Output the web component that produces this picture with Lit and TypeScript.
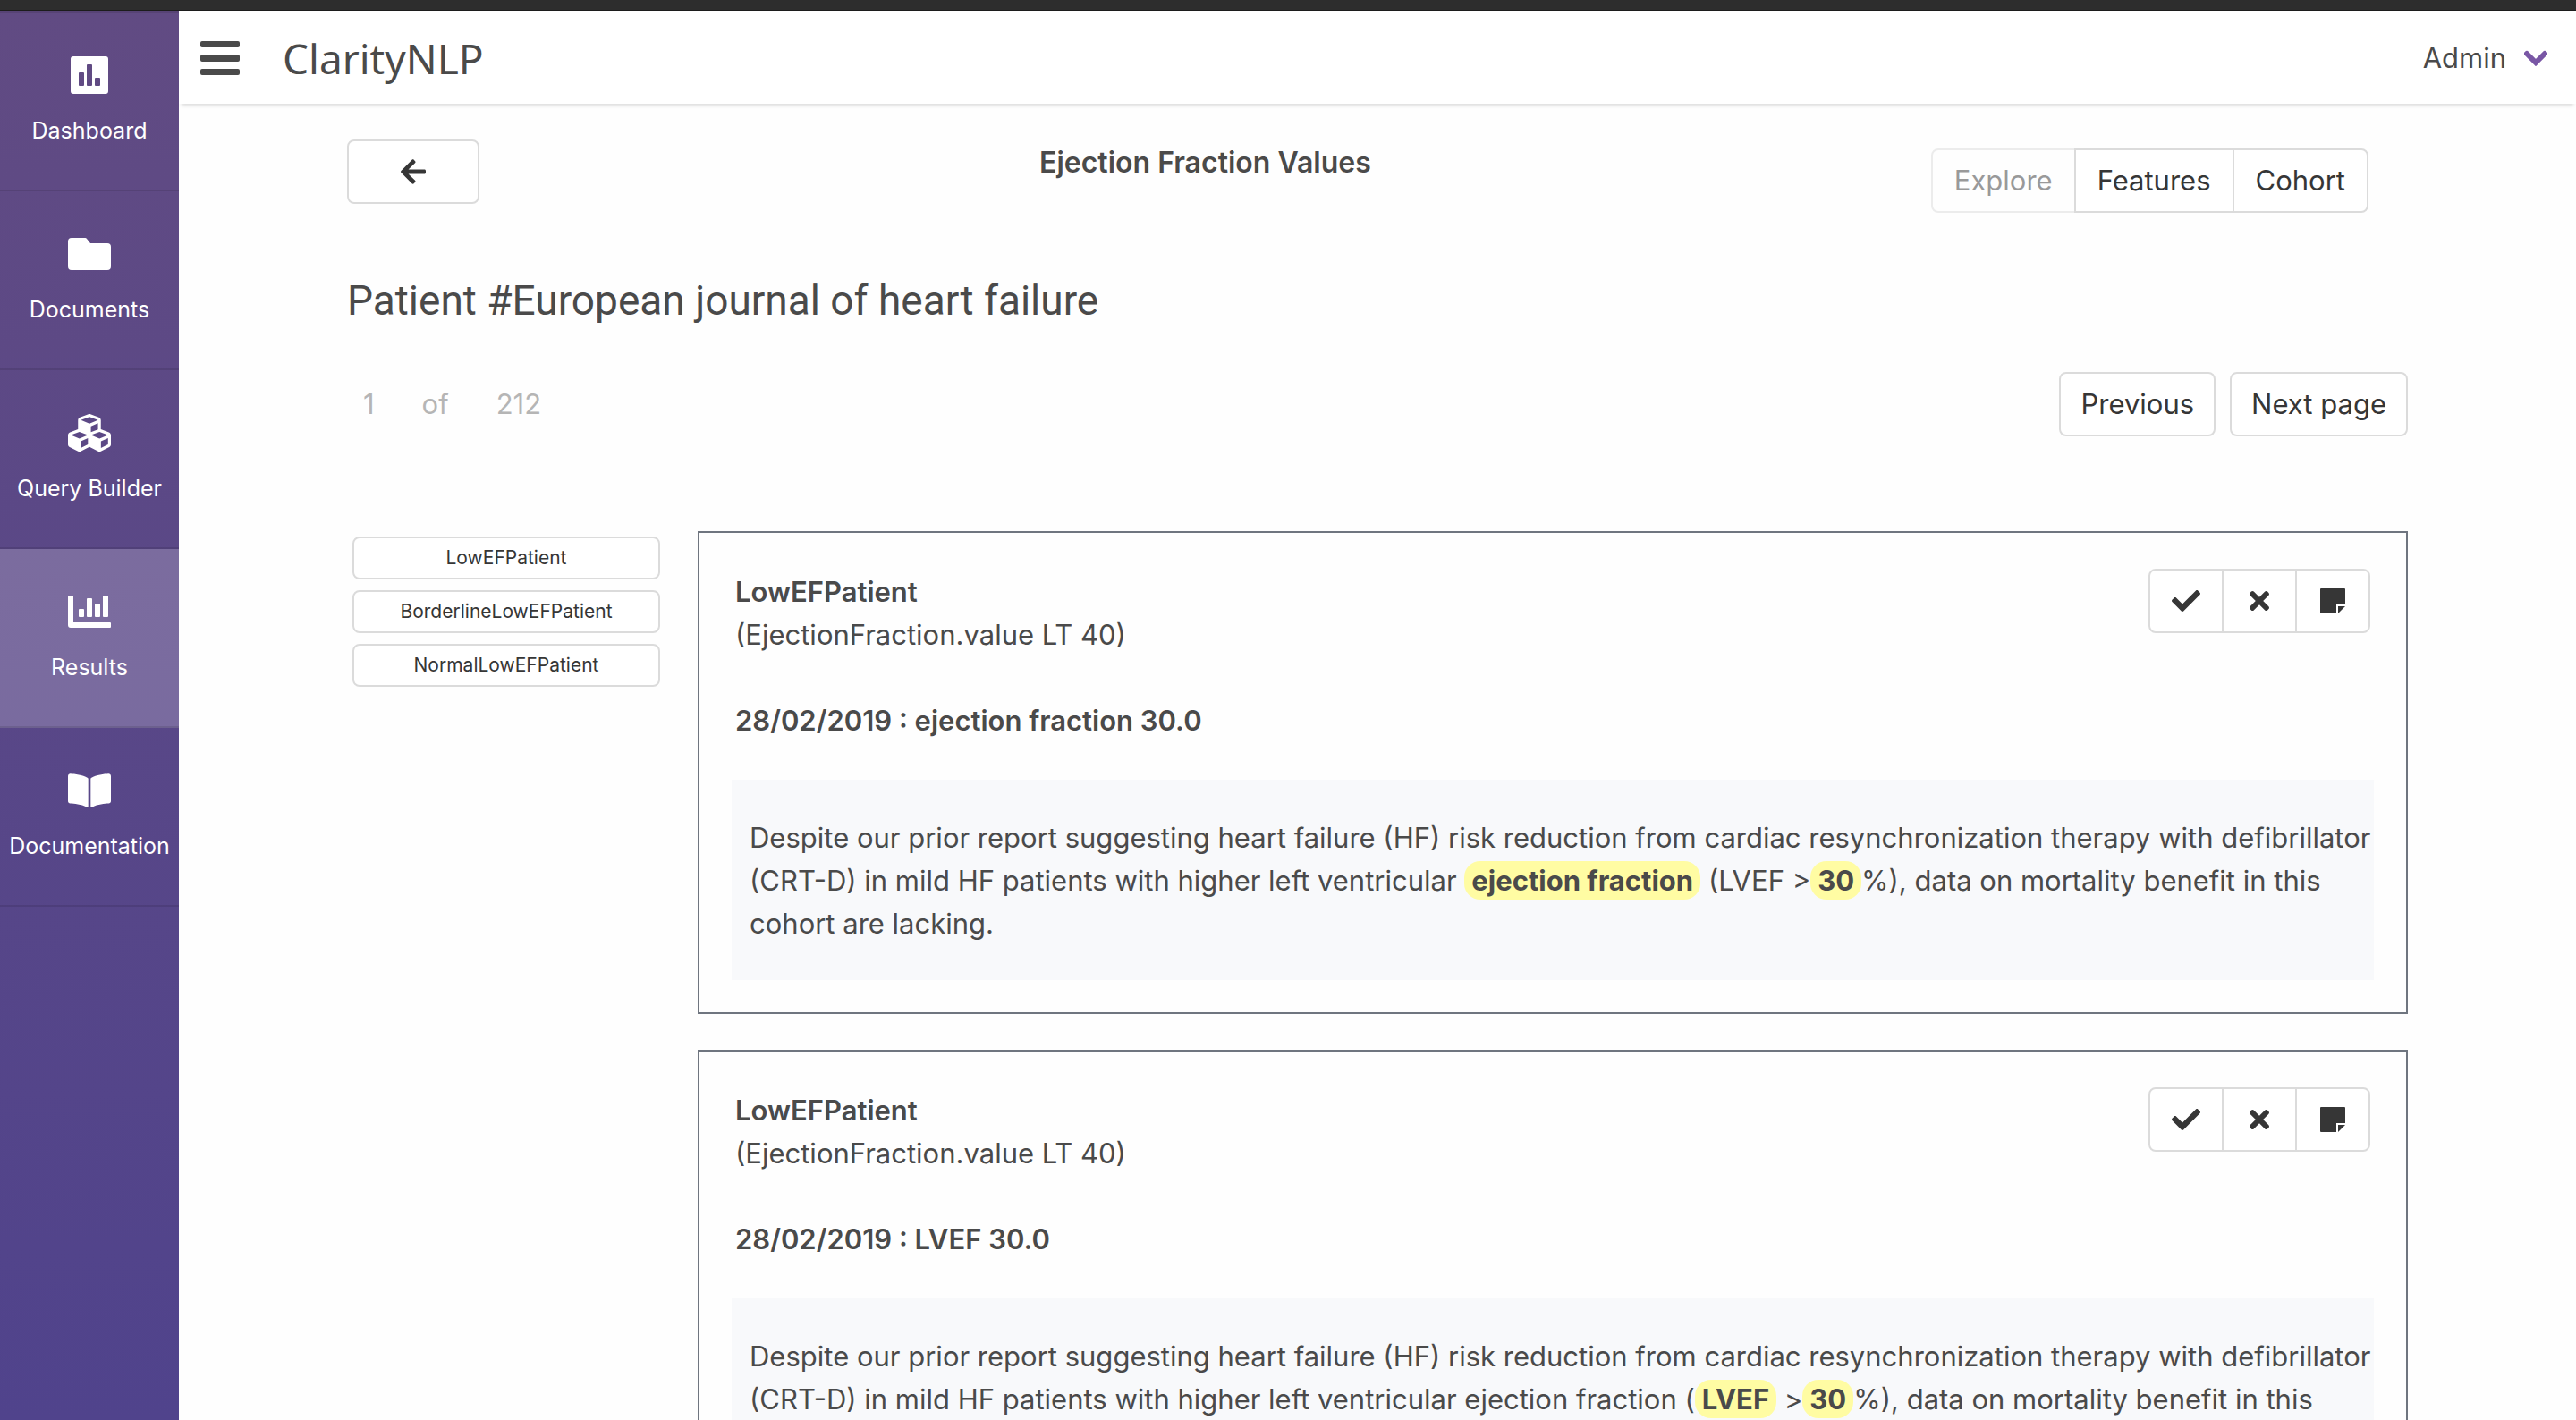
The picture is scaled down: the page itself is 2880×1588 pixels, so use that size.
import { LitElement, html, css, svg, type SVGTemplateResult } from "lit";
import { customElement, property } from "lit/decorators.js";
import { classMap } from "lit/directives/class-map.js";

type Part = string | { mark: string };

interface Evidence {
  feature: string;
  rule: string;
  summary: string;
  sentence: Part[];
}

interface NavItem {
  label: string;
  icon: SVGTemplateResult;
  active?: boolean;
}

const icons = {
  dashboard: svg`<svg viewBox="0 0 48 48" width="48" height="48" fill="currentColor" aria-hidden="true"><path fill-rule="evenodd" d="M6 3h36a3 3 0 0 1 3 3v36a3 3 0 0 1-3 3H6a3 3 0 0 1-3-3V6a3 3 0 0 1 3-3zM13 21a1 1 0 0 0-1 1v13a1 1 0 0 0 1 1h4a1 1 0 0 0 1-1V22a1 1 0 0 0-1-1zM22 12a1 1 0 0 0-1 1v22a1 1 0 0 0 1 1h4a1 1 0 0 0 1-1V13a1 1 0 0 0-1-1zM31 27a1 1 0 0 0-1 1v7a1 1 0 0 0 1 1h4a1 1 0 0 0 1-1v-7a1 1 0 0 0-1-1z"/></svg>`,
  folder: svg`<svg viewBox="0 0 48 48" width="48" height="48" fill="currentColor" aria-hidden="true"><path d="M4 6h15a2 2 0 0 1 2 1l4 5h19a4 4 0 0 1 4 4v22a4 4 0 0 1-4 4H4a4 4 0 0 1-4-4V10a4 4 0 0 1 4-4z"/></svg>`,
  cubes: svg`<svg viewBox="0 0 512 512" width="48" height="48" fill="currentColor" aria-hidden="true"><path d="M488.600 250.200L392 214V105.500c0-15-9.300-28.400-23.400-33.700l-100-37.500c-8.100-3.100-17.100-3.100-25.300 0l-100 37.500c-14.100 5.300-23.400 18.700-23.400 33.700V214l-96.600 36.200C9.300 255.500 0 268.900 0 283.900V394c0 13.600 7.700 26.100 19.900 32.200l100 50c10.100 5.100 22.100 5.100 32.200 0l103.900-52 103.900 52c10.100 5.100 22.100 5.100 32.200 0l100-50c12.200-6.100 19.900-18.600 19.900-32.200V283.900c0-15-9.300-28.400-23.400-33.700zM358 214.800l-85 31.900v-68.200l85-37v73.300zM154 104.100l102-38.200 102 38.200v.6l-102 41.400-102-41.400v-.6zm84 291.100l-85 42.500v-79.100l85-38.800v75.400zm0-112l-102 41.400-102-41.400v-.6l102-38.200 102 38.200v.6zm240 112l-85 42.500v-79.100l85-38.800v75.400zm0-112l-102 41.400-102-41.400v-.6l102-38.200 102 38.200v.6z"/></svg>`,
  chart: svg`<svg viewBox="0 0 48 48" width="48" height="48" fill="currentColor" aria-hidden="true"><path d="M1 6h4a1 1 0 0 1 1 1v29h41a1 1 0 0 1 1 1v4a1 1 0 0 1-1 1H3a3 3 0 0 1-3-3V7a1 1 0 0 1 1-1z"/><rect x="12" y="21" width="6" height="9" rx="1"/><rect x="21" y="9" width="6" height="21" rx="1"/><rect x="30" y="15" width="6" height="15" rx="1"/><rect x="39" y="6" width="6" height="24" rx="1"/></svg>`,
  book: svg`<svg viewBox="0 0 576 512" width="48" height="48" fill="currentColor" aria-hidden="true"><path d="M542.220 32.050c-54.800 3.110-163.720 14.430-230.960 55.590-4.640 2.840-7.270 7.890-7.270 13.170v363.870c0 11.550 12.630 18.850 23.280 13.490 69.180-34.820 169.230-44.320 218.700-46.920 16.890-.89 30.020-14.430 30.020-30.660V62.750c.01-17.710-15.350-31.740-33.770-30.700zM264.730 87.640C197.500 46.480 88.580 35.170 33.780 32.050 15.360 31.010 0 45.040 0 62.750V400.600c0 16.240 13.130 29.780 30.020 30.660 49.490 2.600 149.590 12.110 218.770 46.950 10.620 5.350 23.210-1.940 23.210-13.460V100.630c0-5.290-2.620-10.140-7.270-12.990z"/></svg>`,
  bars: svg`<svg viewBox="0 0 44 40" width="44" height="40" fill="currentColor" aria-hidden="true"><rect y="1" width="44" height="7" rx="2"/><rect y="16" width="44" height="8" rx="2"/><rect y="32" width="44" height="7" rx="2"/></svg>`,
  chevron: svg`<svg viewBox="0 0 26 18" width="26" height="18" fill="none" stroke="currentColor" stroke-width="6" stroke-linecap="round" stroke-linejoin="miter" aria-hidden="true"><path d="M3 4l10 10L23 4"/></svg>`,
  back: svg`<svg viewBox="0 0 448 512" width="28" height="32" fill="currentColor" aria-hidden="true"><path d="M257.500 445.100l-22.200 22.200c-9.400 9.400-24.600 9.400-33.900 0L7 273c-9.400-9.400-9.400-24.600 0-33.900L201.400 44.700c9.400-9.400 24.600-9.400 33.900 0l22.200 22.200c9.500 9.500 9.300 25-.4 34.300L136.600 216H424c13.300 0 24 10.700 24 24v32c0 13.300-10.700 24-24 24H136.600l120.500 114.800c9.800 9.300 10 24.800.4 34.300z"/></svg>`,
  check: svg`<svg viewBox="0 0 512 512" width="32" height="32" fill="currentColor" aria-hidden="true"><path d="M173.898 439.404l-166.400-166.400c-9.997-9.997-9.997-26.206 0-36.204l36.203-36.204c9.997-9.998 26.207-9.998 36.204 0L192 312.690 432.095 72.596c9.997-9.997 26.207-9.997 36.204 0l36.203 36.204c9.997 9.997 9.997 26.206 0 36.204l-294.400 294.401c-9.998 9.997-26.207 9.997-36.204-.001z"/></svg>`,
  times: svg`<svg viewBox="0 0 352 512" width="22" height="32" fill="currentColor" aria-hidden="true"><path d="M242.720 256l100.070-100.070c12.280-12.280 12.280-32.190 0-44.480l-22.240-22.240c-12.280-12.280-32.190-12.280-44.480 0L176 189.280 75.930 89.210c-12.280-12.280-32.190-12.280-44.480 0L9.210 111.450c-12.280 12.280-12.280 32.190 0 44.480L109.280 256 9.210 356.070c-12.280 12.280-12.280 32.190 0 44.480l22.240 22.240c12.280 12.280 32.200 12.280 44.480 0L176 322.720l100.070 100.070c12.280 12.280 32.200 12.280 44.480 0l22.240-22.240c12.280-12.280 12.280-32.190 0-44.480L242.720 256z"/></svg>`,
  note: svg`<svg viewBox="0 0 28 28" width="28" height="28" fill="currentColor" aria-hidden="true"><path d="M1 0h26a1 1 0 0 1 1 1v17H18v10H1a1 1 0 0 1-1-1V1a1 1 0 0 1 1-1z"/><path d="M20 20h8l-8 8z"/></svg>`,
};

const controls = css`
  button {
    display: inline-flex;
    align-items: center;
    justify-content: center;
    box-sizing: border-box;
    height: 72px;
    margin: 0;
    padding: 0 24px;
    border: 2px solid #dbdbdb;
    border-radius: 8px;
    background: #fff;
    color: #363636;
    font: inherit;
    white-space: nowrap;
    cursor: pointer;
  }

  button:disabled {
    opacity: 0.5;
    cursor: default;
  }

  .group {
    display: flex;
  }

  .group button {
    border-radius: 0;
  }

  .group button:not(:first-child) {
    position: relative;
    margin-left: -2px;
  }

  .group button:first-child {
    border-radius: 8px 0 0 8px;
  }

  .group button:last-child {
    border-radius: 0 8px 8px 0;
  }
`;

@customElement("side-nav")
export class SideNav extends LitElement {
  static styles = css`
    :host {
      display: block;
      background: linear-gradient(#614b83, #50438c);
      color: #fff;
    }

    nav {
      display: flex;
      flex-direction: column;
      border-top: 2px solid rgba(0, 0, 0, 0.1);
    }

    .item {
      display: flex;
      flex-direction: column;
      align-items: center;
      gap: 18px;
      box-sizing: border-box;
      height: 200px;
      padding-top: 46px;
      border-bottom: 2px solid rgba(0, 0, 0, 0.1);
      color: inherit;
      font-size: 25px;
      line-height: 40px;
      text-decoration: none;
      white-space: nowrap;
    }

    .active {
      background: rgba(255, 255, 255, 0.2);
    }
  `;

  private items: NavItem[] = [
    { label: "Dashboard", icon: icons.dashboard },
    { label: "Documents", icon: icons.folder },
    { label: "Query Builder", icon: icons.cubes },
    { label: "Results", icon: icons.chart, active: true },
    { label: "Documentation", icon: icons.book },
  ];

  render() {
    return html`<nav aria-label="Main">
      ${this.items.map(
        (item) => html`<a class=${classMap({ item: true, active: !!item.active })} href="#">
          ${item.icon}<span>${item.label}</span>
        </a>`
      )}
    </nav>`;
  }
}

@customElement("evidence-card")
export class EvidenceCard extends LitElement {
  @property({ attribute: false }) evidence!: Evidence;

  static styles = [
    controls,
    css`
      :host {
        display: block;
        padding: 40px 36px 36px;
        border: 2px solid #6f757f;
      }

      .head {
        display: flex;
        align-items: flex-start;
        justify-content: space-between;
        margin-bottom: 42px;
        padding: 0 4px;
      }

      .text {
        padding-top: 2px;
      }

      h2,
      h3,
      p {
        margin: 0;
        font-size: inherit;
      }

      h2,
      h3 {
        font-weight: 600;
      }

      h3 {
        margin-top: 48px;
      }

      .group button {
        width: 84px;
        padding: 0;
      }

      .sentence {
        padding: 41px 0 39px 20px;
        background: #f8f9fb;
      }

      mark {
        padding: 3px 8px;
        border-radius: 18px;
        background: #fffca3;
        color: inherit;
        font-weight: 700;
      }
    `,
  ];

  render() {
    const { feature, rule, summary, sentence } = this.evidence;
    return html`
      <div class="head">
        <div class="text">
          <h2>${feature}</h2>
          <p>${rule}</p>
          <h3>${summary}</h3>
        </div>
        <div class="group">
          <button type="button" aria-label="Accept">${icons.check}</button>
          <button type="button" aria-label="Reject">${icons.times}</button>
          <button type="button" aria-label="Comment">${icons.note}</button>
        </div>
      </div>
      <p class="sentence">${sentence.map((part) => (typeof part === "string" ? part : html`<mark>${part.mark}</mark>`))}</p>
    `;
  }
}

@customElement("app-root")
export class AppRoot extends LitElement {
  static styles = [
    controls,
    css`
      :host {
        display: flex;
        flex-direction: column;
        height: 100vh;
        overflow: hidden;
        background: #fefefe;
        color: #4a4a4a;
        font-family: Inter, "Liberation Sans", sans-serif;
        font-size: 31px;
        line-height: 48px;
      }

      .strip {
        flex: none;
        height: 12px;
        box-sizing: border-box;
        border-bottom: 1px solid #1c1c1c;
        background: #2d2d2d;
      }

      .shell {
        display: grid;
        grid-template-columns: 200px minmax(0, 1fr);
        flex: 1;
        min-height: 0;
      }

      .page {
        display: flex;
        flex-direction: column;
        min-height: 0;
      }

      .bar {
        display: flex;
        align-items: center;
        flex: none;
        height: 104px;
        box-sizing: border-box;
        padding: 2px 32px 0 24px;
        background: #fff;
        box-shadow: 0 5px 4px -3px rgba(10, 10, 10, 0.14);
      }

      .bar button {
        height: 48px;
        padding: 0;
        border: 0;
        background: none;
      }

      .bar .menu {
        color: #4a4a4a;
      }

      .brand {
        margin-left: 48px;
        color: #4a4a4a;
        font-family: "Noto Sans", "Open Sans", sans-serif;
        font-size: 46px;
        line-height: 52px;
        text-decoration: none;
      }

      .bar .user {
        gap: 20px;
        margin-left: auto;
        color: #4a4a4a;
      }

      .user svg {
        color: #7957a5;
      }

      main {
        flex: 1;
        min-height: 0;
        padding: 40px 188px;
        overflow-y: auto;
        scrollbar-width: none;
      }

      .top {
        display: flex;
        align-items: flex-start;
        justify-content: space-between;
        padding-right: 44px;
      }

      .back {
        width: 148px;
      }

      .top h1 {
        margin: 2px 0 0;
        font-size: 32px;
        font-weight: 600;
      }

      .top .group {
        margin-top: 10px;
      }

      .patient {
        margin: 70px 0 52px;
        font-family: Roboto, Inter, sans-serif;
        font-size: 46px;
        font-weight: 400;
        line-height: 56px;
      }

      .pager {
        display: flex;
        align-items: center;
        gap: 16px;
        margin-bottom: 106px;
      }

      .pager button {
        padding: 0 22px;
      }

      .count {
        display: flex;
        gap: 53px;
        margin-right: auto;
        padding-left: 18px;
        color: #b5b5b5;
      }

      .results {
        display: grid;
        grid-template-columns: 356px minmax(0, 1fr);
        gap: 36px;
      }

      .filters {
        display: flex;
        flex-direction: column;
        gap: 12px;
        padding: 6px;
      }

      .filters button {
        height: 48px;
        font-size: 21px;
      }

      .cards {
        display: flex;
        flex-direction: column;
        gap: 40px;
      }
    `,
  ];

  private filters = ["LowEFPatient", "BorderlineLowEFPatient", "NormalLowEFPatient"];

  private cards: Evidence[] = [
    {
      feature: "LowEFPatient",
      rule: "(EjectionFraction.value LT 40)",
      summary: "28/02/2019 : ejection fraction 30.0",
      sentence: [
        "Despite our prior report suggesting heart failure (HF) risk reduction from cardiac resynchronization therapy with defibrillator (CRT-D) in mild HF patients with higher left ventricular ",
        { mark: "ejection fraction" },
        " (LVEF >",
        { mark: "30" },
        "%), data on mortality benefit in this cohort are lacking.",
      ],
    },
    {
      feature: "LowEFPatient",
      rule: "(EjectionFraction.value LT 40)",
      summary: "28/02/2019 : LVEF 30.0",
      sentence: [
        "Despite our prior report suggesting heart failure (HF) risk reduction from cardiac resynchronization therapy with defibrillator (CRT-D) in mild HF patients with higher left ventricular ejection fraction (",
        { mark: "LVEF" },
        " >",
        { mark: "30" },
        "%), data on mortality benefit in this cohort are lacking.",
      ],
    },
  ];

  render() {
    return html`
      <div class="strip"></div>
      <div class="shell">
        <side-nav></side-nav>
        <div class="page">
          <header class="bar">
            <button class="menu" type="button" aria-label="Toggle menu">${icons.bars}</button>
            <a class="brand" href="#">ClarityNLP</a>
            <button class="user" type="button">Admin ${icons.chevron}</button>
          </header>
          <main>
            <div class="top">
              <button class="back" type="button" aria-label="Back">${icons.back}</button>
              <h1>Ejection Fraction Values</h1>
              <div class="group">
                <button type="button" disabled>Explore</button>
                <button type="button">Features</button>
                <button type="button">Cohort</button>
              </div>
            </div>
            <h2 class="patient">Patient #European journal of heart failure</h2>
            <div class="pager">
              <div class="count"><span>1</span><span>of</span><span>212</span></div>
              <button type="button">Previous</button>
              <button type="button">Next page</button>
            </div>
            <div class="results">
              <aside class="filters">
                ${this.filters.map((name) => html`<button type="button">${name}</button>`)}
              </aside>
              <section class="cards">
                ${this.cards.map((card) => html`<evidence-card .evidence=${card}></evidence-card>`)}
              </section>
            </div>
          </main>
        </div>
      </div>
    `;
  }
}
